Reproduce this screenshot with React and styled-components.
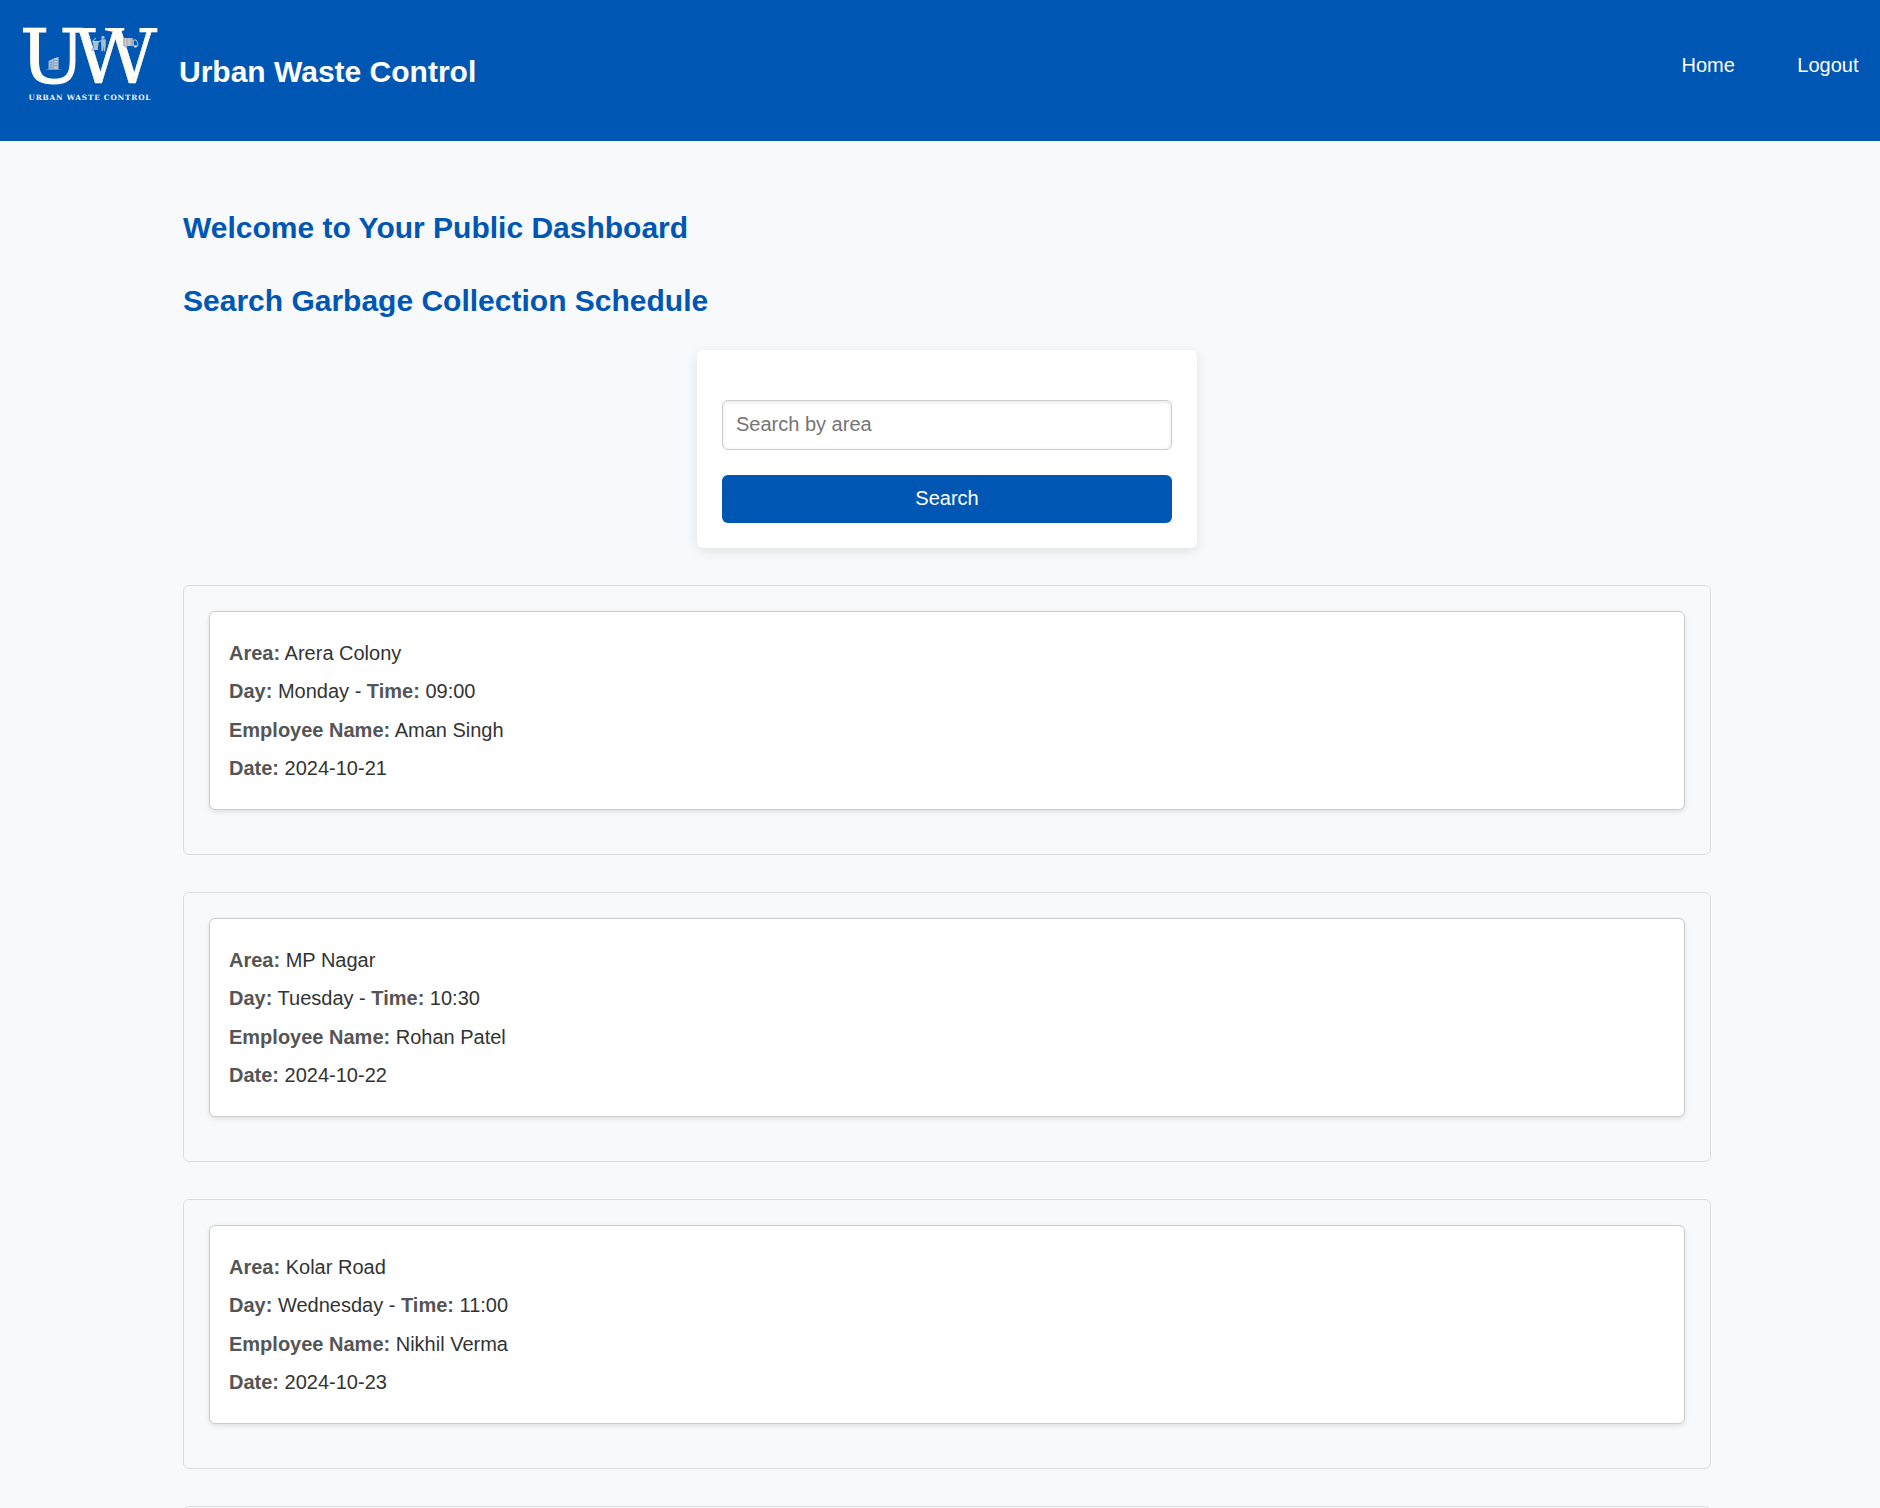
import React from 'react';
import styled, { createGlobalStyle } from 'styled-components';

const GlobalStyle = createGlobalStyle`
  * { box-sizing: border-box; }
  html { overflow: hidden; }
  body {
    margin: 0;
    height: 1508px;
    overflow: hidden;
    background: #f8f9fb;
    color: #333;
    font-family: 'Liberation Sans', Arial, sans-serif;
    font-size: 20px;
    line-height: 1.15;
  }
`;

const Header = styled.header`
  display: flex;
  align-items: center;
  height: 141px;
  padding: 0 21.5px 0 20px;
  background: #0056b3;
  color: #fff;
`;

const LogoMark = styled.svg`
  display: block;
  width: 140px;
  height: 141px;
  margin-right: 19px;
`;

const SiteName = styled.h1`
  margin: 0 auto 0 0;
  padding-top: 2px;
  font-size: 30px;
  font-weight: 700;
  line-height: 36px;
`;

const Nav = styled.nav`
  display: flex;
  gap: 62.5px;
  margin-bottom: 12px;
`;

const NavLink = styled.a`
  color: #fff;
  font-size: 20px;
  line-height: 24px;
  text-decoration: none;
`;

const Main = styled.main`
  width: 1528px;
  height: 1367px;
  margin-left: 183px;
  padding-top: 63px;
  overflow: hidden;
`;

const Heading = styled.h2`
  margin: 0 0 25px;
  color: #0056b3;
  font-size: 30px;
  font-weight: 700;
  line-height: 48px;
`;

const SearchForm = styled.form`
  display: flex;
  flex-direction: column;
  gap: 25px;
  width: 500px;
  height: 198px;
  margin: 0 auto 37px;
  padding: 50px 25px 25px;
  border-radius: 6px;
  background: #fff;
  box-shadow: 0 3px 12px rgba(0, 0, 0, 0.1);
`;

const SearchInput = styled.input`
  height: 50px;
  padding: 0 13px 2px;
  border: 1px solid #ccc;
  border-radius: 6px;
  background: #fff;
  box-shadow: inset 0 1px 4px rgba(0, 0, 0, 0.1);
  color: #333;
  font: 20px 'Liberation Sans', Arial, sans-serif;
  &::placeholder { color: #757575; }
`;

const SearchButton = styled.button`
  height: 48px;
  padding: 0 0 2px;
  border: 0;
  border-radius: 6px;
  background: #0056b3;
  color: #fff;
  font: 20px 'Liberation Sans', Arial, sans-serif;
`;

const ScheduleGroup = styled.section`
  height: 270px;
  margin-bottom: 37px;
  padding: 25px;
  border: 1px solid #ddd;
  border-radius: 6px;
`;

const ScheduleCard = styled.article`
  height: 199px;
  padding: 22px 19px;
  border: 1px solid #ccc;
  border-radius: 6px;
  background: #fff;
  box-shadow: 0 2px 5px rgba(0, 0, 0, 0.1);
`;

const Detail = styled.p`
  margin: 0;
  font-size: 20px;
  line-height: 38.4px;
`;

const Label = styled.strong`
  color: #555;
  font-weight: 700;
`;

const schedules = [
  { area: 'Arera Colony', day: 'Monday', time: '09:00', employee: 'Aman Singh', date: '2024-10-21' },
  { area: 'MP Nagar', day: 'Tuesday', time: '10:30', employee: 'Rohan Patel', date: '2024-10-22' },
  { area: 'Kolar Road', day: 'Wednesday', time: '11:00', employee: 'Nikhil Verma', date: '2024-10-23' },
];

function Logo() {
  return (
    <LogoMark viewBox="20 0 140 141" role="img" aria-label="Urban Waste Control logo">
      <g fill="#fffdf3" stroke="#fffdf3" fontFamily="'DejaVu Serif', serif">
        <text x="19.8" y="83.3" fontSize="75" strokeWidth=".9" textLength="66" lengthAdjust="spacingAndGlyphs">U</text>
        <text x="73.300" y="83.2" fontSize="75" strokeWidth=".4" textLength="84" lengthAdjust="spacingAndGlyphs">W</text>
        <path d="M105 28h19.300v2.200l-4 1.200h-9l-6.300-1.200z" stroke="none" />
      </g>
      <text x="28.500" y="99.600" fill="#eef4f8" fontFamily="'DejaVu Serif', serif" fontWeight="700" fontSize="7.300" textLength="122">URBAN WASTE CONTROL</text>
      <g>
        <path d="M48.500 61l5-2.500V69.500h-5z" fill="#a7bdd5" />
        <path d="M53.500 58.500l5-1.500v12.500h-5z" fill="#b6c6d7" />
        <path d="M46 69.200h15.500v.6H46z" fill="#a7bdd5" opacity=".6" />
        <path d="M49.500 62.500h3M49.500 65h3M49.500 67.500h3M54.500 60.500h3M54.500 63h3M54.500 65.500h3" stroke="#5e86b2" strokeWidth=".7" />
      </g>
      <g fill="#a9bdd3">
        <circle cx="103" cy="37.400" r="1.700" />
        <path d="M101 39.200h4.800v6l-.7 6h-1.300l-.4-5-.5 5h-1.500z" />
        <path d="M101.500 40.500l-3.500 1.500" stroke="#a9bdd3" strokeWidth="1.200" />
        <path d="M92.800 42h5.800l-.8 8h-4z" />
        <path d="M92.500 41.200l3.500-3.200M92.500 41.500h6" stroke="#d0d8df" strokeWidth="1" />
        <circle cx="93" cy="49.500" r="1.500" />
      </g>
      <g>
        <path d="M123 38h9.800v8H123z" fill="#b3b7bd" />
        <path d="M125.500 38v8M129 38v8" stroke="#d2d3d5" strokeWidth="1" />
        <path d="M133.300 40h2.700l1.700 3v3h-4.400z" fill="none" stroke="#b9cbdd" strokeWidth="1" />
        <circle cx="126" cy="46.500" r="1.300" fill="#9fb8d2" />
        <circle cx="135.500" cy="46.500" r="1.300" fill="#c8d5e2" />
      </g>
    </LogoMark>
  );
}

export default function App() {
  return (
    <>
      <GlobalStyle />
      <Header>
        <Logo />
        <SiteName>Urban Waste Control</SiteName>
        <Nav>
          <NavLink>Home</NavLink>
          <NavLink>Logout</NavLink>
        </Nav>
      </Header>
      <Main>
        <Heading>Welcome to Your Public Dashboard</Heading>
        <Heading>Search Garbage Collection Schedule</Heading>
        <SearchForm>
          <SearchInput type="text" placeholder="Search by area" />
          <SearchButton type="button">Search</SearchButton>
        </SearchForm>
        {schedules.map((s) => (
          <ScheduleGroup key={s.date}>
            <ScheduleCard>
              <Detail><Label>Area:</Label> {s.area}</Detail>
              <Detail><Label>Day:</Label> {s.day} - <Label>Time:</Label> {s.time}</Detail>
              <Detail><Label>Employee Name:</Label> {s.employee}</Detail>
              <Detail><Label>Date:</Label> {s.date}</Detail>
            </ScheduleCard>
          </ScheduleGroup>
        ))}
        <ScheduleGroup />
      </Main>
    </>
  );
}
